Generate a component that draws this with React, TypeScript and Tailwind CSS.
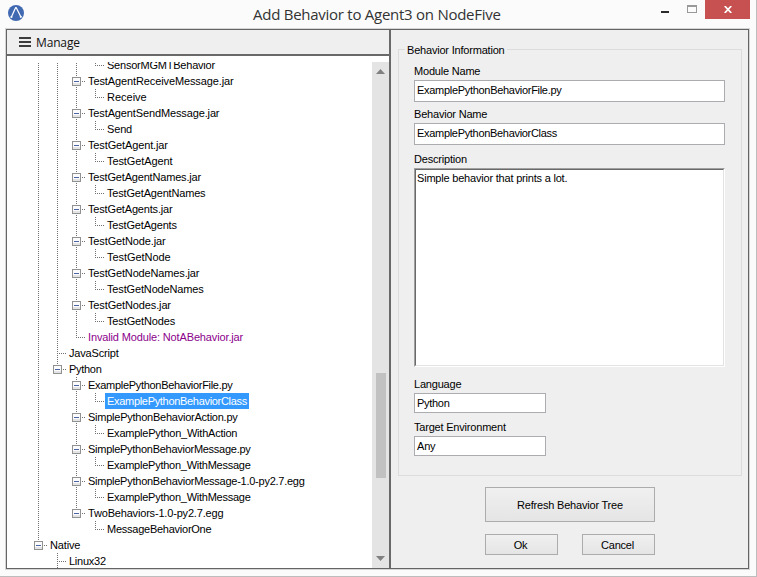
const ui = "font-['Liberation_Sans',Arial,sans-serif] text-[11px] leading-4 text-black whitespace-nowrap";

type Cell = "line" | "none" | "tee" | "end" | "box" | "boxEnd";
type RowData = { cells: Cell[]; text: string; track: string; tone?: "invalid" | "selected" };

const rows: RowData[] = [
  { cells: ["line", "line", "line", "end"], text: "SensorMGMTBehavior", track: "tracking-[-0.22px]" },
  { cells: ["line", "line", "box"], text: "TestAgentReceiveMessage.jar", track: "tracking-[-0.11px]" },
  { cells: ["line", "line", "line", "end"], text: "Receive", track: "tracking-normal" },
  { cells: ["line", "line", "box"], text: "TestAgentSendMessage.jar", track: "tracking-[-0.13px]" },
  { cells: ["line", "line", "line", "end"], text: "Send", track: "tracking-[-0.15px]" },
  { cells: ["line", "line", "box"], text: "TestGetAgent.jar", track: "tracking-[-0.13px]" },
  { cells: ["line", "line", "line", "end"], text: "TestGetAgent", track: "tracking-[-0.1px]" },
  { cells: ["line", "line", "box"], text: "TestGetAgentNames.jar", track: "tracking-[-0.18px]" },
  { cells: ["line", "line", "line", "end"], text: "TestGetAgentNames", track: "tracking-[-0.18px]" },
  { cells: ["line", "line", "box"], text: "TestGetAgents.jar", track: "tracking-[-0.17px]" },
  { cells: ["line", "line", "line", "end"], text: "TestGetAgents", track: "tracking-[-0.18px]" },
  { cells: ["line", "line", "box"], text: "TestGetNode.jar", track: "tracking-[-0.13px]" },
  { cells: ["line", "line", "line", "end"], text: "TestGetNode", track: "tracking-[-0.05px]" },
  { cells: ["line", "line", "box"], text: "TestGetNodeNames.jar", track: "tracking-[-0.15px]" },
  { cells: ["line", "line", "line", "end"], text: "TestGetNodeNames", track: "tracking-[-0.15px]" },
  { cells: ["line", "line", "box"], text: "TestGetNodes.jar", track: "tracking-[-0.13px]" },
  { cells: ["line", "line", "line", "end"], text: "TestGetNodes", track: "tracking-[-0.13px]" },
  { cells: ["line", "line", "end"], text: "Invalid Module: NotABehavior.jar", tone: "invalid", track: "tracking-[-0.14px]" },
  { cells: ["line", "tee"], text: "JavaScript", track: "tracking-[-0.18px]" },
  { cells: ["line", "boxEnd"], text: "Python", track: "tracking-[-0.3px]" },
  { cells: ["line", "none", "box"], text: "ExamplePythonBehaviorFile.py", track: "tracking-[-0.3px]" },
  { cells: ["line", "none", "line", "end"], text: "ExamplePythonBehaviorClass", tone: "selected", track: "tracking-[-0.31px]" },
  { cells: ["line", "none", "box"], text: "SimplePythonBehaviorAction.py", track: "tracking-[-0.24px]" },
  { cells: ["line", "none", "line", "end"], text: "ExamplePython_WithAction", track: "tracking-[-0.23px]" },
  { cells: ["line", "none", "box"], text: "SimplePythonBehaviorMessage.py", track: "tracking-[-0.27px]" },
  { cells: ["line", "none", "line", "end"], text: "ExamplePython_WithMessage", track: "tracking-[-0.25px]" },
  { cells: ["line", "none", "box"], text: "SimplePythonBehaviorMessage-1.0-py2.7.egg", track: "tracking-[-0.25px]" },
  { cells: ["line", "none", "line", "end"], text: "ExamplePython_WithMessage", track: "tracking-[-0.25px]" },
  { cells: ["line", "none", "boxEnd"], text: "TwoBehaviors-1.0-py2.7.egg", track: "tracking-[-0.18px]" },
  { cells: ["line", "none", "none", "end"], text: "MessageBehaviorOne", track: "tracking-[-0.25px]" },
  { cells: ["boxEnd"], text: "Native", track: "tracking-[-0.15px]" },
  { cells: ["none", "tee"], text: "Linux32", track: "tracking-[-0.25px]" },
];

function Guide({ kind }: { kind: Cell }) {
  const isBox = kind === "box" || kind === "boxEnd";
  const full = kind === "line" || kind === "tee" || kind === "box";
  const half = kind === "end" || kind === "boxEnd";
  return (
    <svg width="19" height="16" className="shrink-0" shapeRendering="crispEdges">
      {full && <path d="M9.5 0V16" stroke="#707070" strokeDasharray="1 1" />}
      {half && <path d="M9.5 0V9" stroke="#707070" strokeDasharray="1 1" />}
      {kind !== "line" && kind !== "none" && <path d="M9 8.5H19" stroke="#707070" strokeDasharray="1 1" />}
      {isBox && (
        <>
          <rect x="5.5" y="4.5" width="8" height="8" rx="0.5" fill="#fbfbfb" stroke="#919191" />
          <path d="M6 11H13" stroke="#e4e4e4" strokeWidth="2" />
          <path d="M7 8.5H12" stroke="#4b63a7" />
        </>
      )}
    </svg>
  );
}

type FieldProps = { label: string; value: string; wide?: boolean; track: string };

function Field({ label, value, wide, track }: FieldProps) {
  return (
    <div className={wide ? "h-[43px]" : "h-[43px] w-[132px]"}>
      <div className="h-[17px] tracking-[-0.2px]">{label}</div>
      <div className={`border border-[#ababb0] bg-white pl-0.5 ${track} ${wide ? "h-[22px] pt-px" : "h-5 pt-px"}`}>{value}</div>
    </div>
  );
}

function Button({ children, className }: { children: string; className: string }) {
  return (
    <button className={`flex items-center justify-center border border-[#acacac] bg-linear-to-b from-[#f0f0f0] to-[#e5e5e5] tracking-[-0.2px] ${className}`}>
      {children}
    </button>
  );
}

export default function App() {
  return (
    <div className={`flex h-[577px] w-[757px] flex-col overflow-hidden border-r border-b border-[#bdbdbd] bg-[#fbfbfb] ${ui}`}>
      <header className="flex h-7 shrink-0 items-start">
        <svg width="16" height="16" viewBox="0 0 16 16" className="mt-[5px] ml-2 shrink-0">
          <circle cx="8" cy="8" r="8" fill="#4169b2" />
          <path d="M3.4 12L7.2 3.4M8.4 3L12.8 11.8" stroke="#fff" strokeWidth="1.2" fill="none" />
          <circle cx="3.4" cy="12" r="1.1" fill="#fff" />
          <circle cx="7.9" cy="3" r="1.1" fill="#fff" />
          <circle cx="12.8" cy="11.8" r="1.1" fill="#fff" />
        </svg>
        <h1 className="mt-0.5 ml-[229px] w-[404px] font-['Open_Sans',sans-serif] text-[15px] leading-6 tracking-[-0.26px] text-[#333]">
          Add Behavior to Agent3 on NodeFive
        </h1>
        <svg width="48" height="19" className="shrink-0" shapeRendering="crispEdges">
          <path d="M4 12H12" stroke="#2b2b2b" strokeWidth="2" />
          <path d="M30.5 5.5H39.5V12.5H30.5ZM30 6.5H40" stroke="#999" fill="none" />
        </svg>
        <div className="flex h-[19px] w-[45px] shrink-0 items-center justify-center bg-[#c75050]">
          <svg width="8" height="7" viewBox="0 0 8 7"><path d="M.7 0L7.3 7M7.3 0L.7 7" stroke="#fff" strokeWidth="1.7" /></svg>
        </div>
      </header>

      <div className="ml-[5px] h-[542px] w-[745px] border border-[#d5d5d5]">
        <div className="flex h-full border border-[#646464] bg-[#efefef]">
          <section className="flex w-[384px] shrink-0 flex-col border-r-2 border-[#696969] bg-white">
            <div className="flex h-[26px] shrink-0 items-center border-b-2 border-[#696969] bg-[#efefef] pl-3">
              <svg width="12" height="10" shapeRendering="crispEdges">
                <path d="M0 1H12M0 5H12M0 9H12" stroke="#3c3c3c" strokeWidth="2" />
              </svg>
              <span className="mt-px ml-[5px] font-['Open_Sans',sans-serif] text-xs tracking-[-0.15px] text-[#111]">Manage</span>
            </div>
            <div className="mt-1.5 flex min-h-0 flex-1">
              <div className="w-[365px] overflow-hidden">
                <div className="-mt-[5px] pl-[22px]">
                  {rows.map((r, i) => (
                    <div key={i} className="flex h-4">
                      {r.cells.map((c, j) => (
                        <Guide key={j} kind={c} />
                      ))}
                      <span
                        className={`px-0.5 ${r.track} ${r.tone === "selected" ? "bg-[#3399ff] text-white" : r.tone === "invalid" ? "text-[#8b008b]" : ""}`}
                      >
                        {r.text}
                      </span>
                    </div>
                  ))}
                </div>
              </div>
              <div className="flex w-[17px] flex-col items-center bg-[#e4e4e4]">
                <svg width="9" height="5" className="mt-[7px] shrink-0"><path d="M0 5L4.5 0L9 5Z" fill="#808080" /></svg>
                <div className="mt-[299px] h-[105px] w-2.5 shrink-0 bg-[#c1c1c1]" />
                <svg width="9" height="5" className="mt-[78px] shrink-0"><path d="M0 0L4.5 5L9 0Z" fill="#808080" /></svg>
              </div>
            </div>
          </section>

          <section className="flex-1">
            <fieldset className="mt-2.5 ml-[7px] h-[436px] w-[344px] border border-[#dcdcdc] pl-[15px]">
              <legend className="-ml-[9px] px-0.5 pt-0.5 tracking-[-0.2px]">Behavior Information</legend>
              <div className="w-[311px] pt-[5px]">
                <Field wide label="Module Name" value="ExamplePythonBehaviorFile.py" track="tracking-[-0.3px]" />
                <Field wide label="Behavior Name" value="ExamplePythonBehaviorClass" track="tracking-[-0.31px]" />
                <div className="mt-0.5 h-[17px] tracking-[-0.2px]">Description</div>
                <div className="h-[199px] border border-t-[#a0a0a0] border-r-white border-b-white border-l-[#a0a0a0]">
                  <div className="h-full border border-t-[#696969] border-r-[#e3e3e3] border-b-[#e3e3e3] border-l-[#696969] bg-white pl-px tracking-[-0.2px]">
                    Simple behavior that prints a lot.
                  </div>
                </div>
                <div className="pt-[9px]">
                  <Field label="Language" value="Python" track="tracking-[-0.3px]" />
                  <Field label="Target Environment" value="Any" track="tracking-[-0.2px]" />
                </div>
              </div>
            </fieldset>
            <div className="mt-[11px] ml-[94px] w-[170px]">
              <Button className="h-[35px] w-full">Refresh Behavior Tree</Button>
              <div className="mt-3 flex justify-between">
                <Button className="h-[21px] w-[73px] pr-0.5">Ok</Button>
                <Button className="h-[21px] w-[73px] pr-0.5">Cancel</Button>
              </div>
            </div>
          </section>
        </div>
      </div>
    </div>
  );
}
